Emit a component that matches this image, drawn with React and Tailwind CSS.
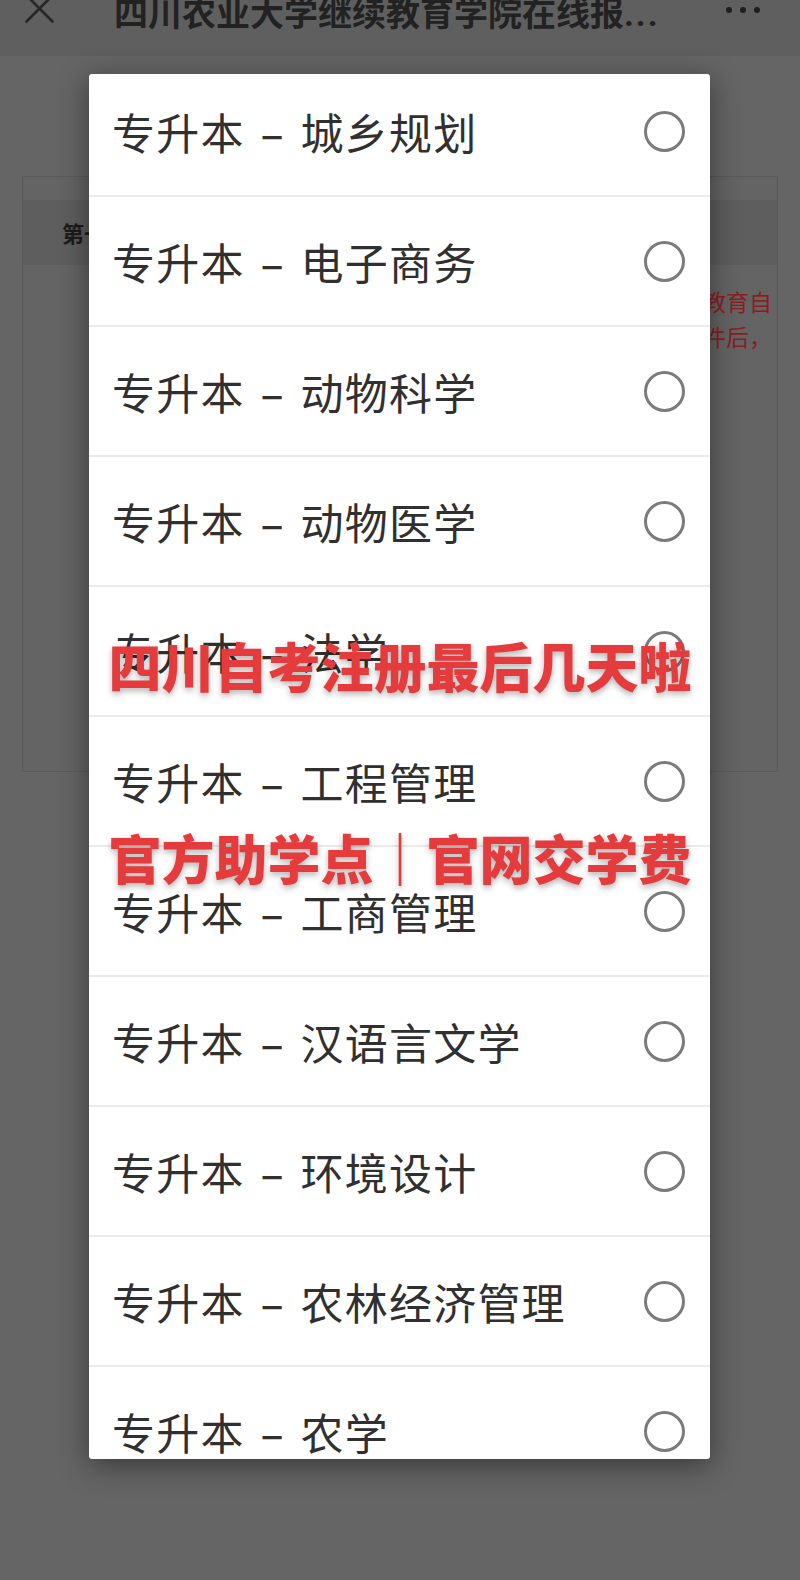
import React from "react";

const items = [
  "城乡规划",
  "电子商务",
  "动物科学",
  "动物医学",
  "法学",
  "工程管理",
  "工商管理",
  "汉语言文学",
  "环境设计",
  "农林经济管理",
  "农学",
];

function Row({ name }) {
  return (
    <div className="h-[130px] shrink-0 border-b-2 border-[#ebebeb] flex items-center justify-between pl-[23px] pr-[25px]">
      <div className="text-[43px] leading-[43px] text-[#303030] whitespace-nowrap flex items-center tracking-[1.2px]">
        <span>专升本</span>
        <span className="inline-block w-[56px] text-center font-medium">–</span>
        <span>{name}</span>
      </div>
      <div className="w-[41px] h-[41px] rounded-full border-[3.5px] border-[#7b7b7b]" />
    </div>
  );
}

export default function App() {
  return (
    <div className="relative w-[800px] h-[1580px] overflow-hidden bg-[#656565] font-['Noto_Sans_CJK_SC','Noto_Sans',sans-serif]">
      {/* header */}
      <header className="h-[56px] bg-[#5f5f5f] flex items-start">
        <div className="w-[114px] shrink-0 pl-[25px]">
          <svg width="29" height="29" viewBox="0 0 29 29" className="mt-[-6px]">
            <path d="M1.5 1.5 L27.5 27.5 M27.5 1.5 L1.5 27.5" stroke="#262626" strokeWidth="2.6" strokeLinecap="round" />
          </svg>
        </div>
        <div className="flex-1 mt-[-5px] text-[34px] leading-[34px] font-bold text-[#222] whitespace-nowrap">
          四川农业大学继续教育学院在线报<span className="font-['Roboto',sans-serif] tracking-[2px]">...</span>
        </div>
        <div className="flex gap-[8px] pr-[40px] pt-[7px]">
          <span className="w-[6px] h-[6px] rounded-full bg-[#1e1e1e]" />
          <span className="w-[6px] h-[6px] rounded-full bg-[#1e1e1e]" />
          <span className="w-[6px] h-[6px] rounded-full bg-[#1e1e1e]" />
        </div>
      </header>

      {/* background card */}
      <div className="mx-[22px] mt-[120px] h-[596px] border border-[#5a5a5a] bg-[#646464]">
        <div className="mt-[23px] h-[65px] bg-[#5e5e5e] flex items-center pl-[39px] font-bold text-[22px] text-[#1c1c1c]">
          第一志愿报考专业
        </div>
        <div className="pt-[19px] pr-[5px] text-[23px] leading-[35px] text-[#8a1f1f] flex flex-col items-end">
          <div className="whitespace-nowrap">根据四川省教育考试院通知，四川农业大学继续教育自</div>
          <div className="whitespace-nowrap">考助学报名需在完成注册并上传相关证件后，</div>
        </div>
      </div>

      {/* modal */}
      <div className="absolute left-[89px] top-[74px] w-[621px] h-[1385px] bg-white rounded-[3px] overflow-hidden shadow-[0_6px_30px_rgba(0,0,0,0.45)]">
        <div className="mt-[-7px] flex flex-col">
          {items.map((n) => (
            <Row key={n} name={n} />
          ))}
        </div>
      </div>

      {/* red watermark */}
      <div className="absolute inset-x-0 top-[639px] flex flex-col items-center gap-[139px] pointer-events-none">
        <div className="text-[53px] leading-[53px] font-black text-[#e63b3d] whitespace-nowrap [text-shadow:0_3px_6px_rgba(0,0,0,0.3)]">
          四川自考注册最后几天啦
        </div>
        <div className="text-[53px] leading-[53px] font-black text-[#e63b3d] whitespace-nowrap [text-shadow:0_3px_6px_rgba(0,0,0,0.3)]">
          官方助学点｜官网交学费
        </div>
      </div>
    </div>
  );
}
